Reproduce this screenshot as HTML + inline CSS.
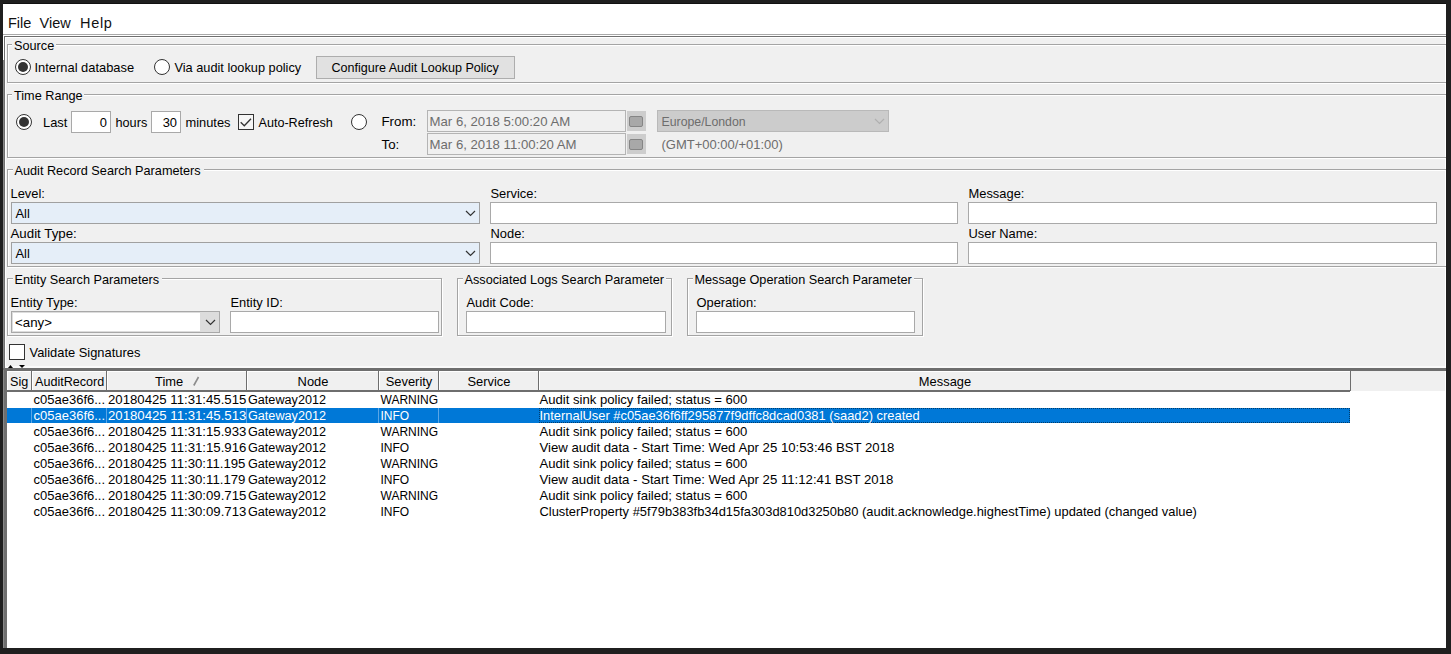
<!DOCTYPE html>
<html><head><meta charset="utf-8"><style>
html,body{margin:0;padding:0;background:#1f1f1f}
body{width:1451px;height:654px;background:#1f1f1f;position:relative;overflow:hidden;font-family:"Liberation Sans", sans-serif}
#win{position:absolute;left:0;top:0;width:1446px;height:648px;overflow:hidden}
</style></head><body><div id="win">
<div style="position:absolute;left:3px;top:4px;width:1443px;height:644px;background:#f0f0f0"></div>
<div style="position:absolute;left:3px;top:3px;width:1443px;height:1px;background:#111"></div>
<div style="position:absolute;left:3px;top:4px;width:1443px;height:30px;background:#fff"></div>
<div style="position:absolute;left:3px;top:34px;width:1443px;height:1px;background:#a9a9a9"></div>
<div style="position:absolute;left:3px;top:35px;width:1443px;height:1px;background:#fff"></div>
<div style="position:absolute;left:8px;top:13.21px;height:20px;line-height:20px;font-size:14.5px;color:#111;white-space:pre;">File</div>
<div style="position:absolute;left:39.5px;top:13.21px;height:20px;line-height:20px;font-size:14.5px;color:#111;white-space:pre;">View</div>
<div style="position:absolute;left:80px;top:13.21px;height:20px;line-height:20px;font-size:14.5px;color:#111;white-space:pre;letter-spacing:0.7px">Help</div>
<div style="position:absolute;left:4px;top:36px;width:1442px;height:1px;background:#6f6f6f"></div>
<div style="position:absolute;left:3px;top:36px;width:1px;height:24px;background:#fff"></div>
<div style="position:absolute;left:4px;top:36px;width:1px;height:24px;background:#6f6f6f"></div>
<div style="position:absolute;left:3px;top:60px;width:1px;height:308px;background:#888"></div>
<div style="position:absolute;left:4px;top:60px;width:1px;height:308px;background:#707070"></div>
<div style="position:absolute;left:5px;top:37px;width:1440px;height:1px;background:#fff"></div>
<div style="position:absolute;left:5px;top:37px;width:1px;height:331px;background:#fff"></div>
<div style="position:absolute;left:1445px;top:37px;width:1px;height:331px;background:#fff"></div>
<div style="position:absolute;left:8px;top:45px;width:1453px;height:39px;border:1px solid #fff;border-right:none;box-sizing:border-box"></div>
<div style="position:absolute;left:7px;top:44px;width:1453px;height:39px;border:1px solid #a4a4a4;border-right:none;box-sizing:border-box"></div>
<div style="position:absolute;left:12px;top:43px;width:44px;height:4px;background:#f0f0f0"></div>
<div style="position:absolute;left:14px;top:35.80px;height:20px;line-height:20px;font-size:12.7px;color:#000;white-space:pre;">Source</div>
<div style="position:absolute;left:15px;top:59px;width:14px;height:14px;border:1px solid #333;border-radius:50%;background:#fff"></div>
<div style="position:absolute;left:18px;top:62px;width:10px;height:10px;border-radius:50%;background:#333"></div>
<div style="position:absolute;left:34.5px;top:57.74px;height:20px;line-height:20px;font-size:12.9px;color:#000;white-space:pre;">Internal database</div>
<div style="position:absolute;left:154px;top:59px;width:14px;height:14px;border:1px solid #333;border-radius:50%;background:#fff"></div>
<div style="position:absolute;left:174.5px;top:57.79px;height:20px;line-height:20px;font-size:12.75px;color:#000;white-space:pre;">Via audit lookup policy</div>
<div style="position:absolute;left:316px;top:56px;width:199px;height:23px;border:1px solid #adadad;background:#e1e1e1;box-sizing:border-box"></div>
<div style="position:absolute;left:331.5px;top:57.85px;height:20px;line-height:20px;font-size:12.55px;color:#000;white-space:pre;">Configure Audit Lookup Policy</div>
<div style="position:absolute;left:8px;top:95px;width:1453px;height:64px;border:1px solid #fff;border-right:none;box-sizing:border-box"></div>
<div style="position:absolute;left:7px;top:94px;width:1453px;height:64px;border:1px solid #a4a4a4;border-right:none;box-sizing:border-box"></div>
<div style="position:absolute;left:12px;top:93px;width:72px;height:4px;background:#f0f0f0"></div>
<div style="position:absolute;left:14px;top:85.80px;height:20px;line-height:20px;font-size:12.7px;color:#000;white-space:pre;">Time Range</div>
<div style="position:absolute;left:16px;top:114px;width:14px;height:14px;border:1px solid #333;border-radius:50%;background:#fff"></div>
<div style="position:absolute;left:19px;top:117px;width:10px;height:10px;border-radius:50%;background:#333"></div>
<div style="position:absolute;left:43px;top:112.74px;height:20px;line-height:20px;font-size:12.9px;color:#000;white-space:pre;">Last</div>
<div style="position:absolute;left:71px;top:111px;width:40px;height:22px;border:1px solid #a9a9a9;background:#fff;box-sizing:border-box"></div>
<div style="position:absolute;left:71px;top:112.74px;height:20px;line-height:20px;font-size:12.9px;color:#000;white-space:pre;width:36px;text-align:right">0</div>
<div style="position:absolute;left:115.5px;top:112.80px;height:20px;line-height:20px;font-size:12.7px;color:#000;white-space:pre;">hours</div>
<div style="position:absolute;left:151px;top:111px;width:30px;height:22px;border:1px solid #a9a9a9;background:#fff;box-sizing:border-box"></div>
<div style="position:absolute;left:151px;top:112.74px;height:20px;line-height:20px;font-size:12.9px;color:#000;white-space:pre;width:26px;text-align:right">30</div>
<div style="position:absolute;left:185.5px;top:112.75px;height:20px;line-height:20px;font-size:12.85px;color:#000;white-space:pre;">minutes</div>
<div style="position:absolute;left:238px;top:114px;width:16px;height:16px;border:1px solid #333;background:#f6f6f6;box-sizing:border-box"></div>
<svg style="position:absolute;left:0;top:0" width="1451" height="654"><polyline points="240.7,122.3 244.3,125.8 251,118.7" fill="none" stroke="#333" stroke-width="1.3"/></svg>
<div style="position:absolute;left:258.5px;top:112.84px;height:20px;line-height:20px;font-size:12.6px;color:#000;white-space:pre;">Auto-Refresh</div>
<div style="position:absolute;left:351px;top:114px;width:14px;height:14px;border:1px solid #333;border-radius:50%;background:#fff"></div>
<div style="position:absolute;left:381.5px;top:111.60px;height:20px;line-height:20px;font-size:13.3px;color:#000;white-space:pre;">From:</div>
<div style="position:absolute;left:381.5px;top:134.60px;height:20px;line-height:20px;font-size:13.3px;color:#000;white-space:pre;">To:</div>
<div style="position:absolute;left:427px;top:110px;width:199px;height:22px;border:1px solid #b4b4b4;background:#f0f0f0;box-sizing:border-box"></div>
<div style="position:absolute;left:427px;top:133px;width:199px;height:22px;border:1px solid #b4b4b4;background:#f0f0f0;box-sizing:border-box"></div>
<div style="position:absolute;left:429.5px;top:111.64px;height:20px;line-height:20px;font-size:13.2px;color:#6d6d6d;white-space:pre;">Mar 6, 2018 5:00:20 AM</div>
<div style="position:absolute;left:429.5px;top:134.64px;height:20px;line-height:20px;font-size:13.2px;color:#6d6d6d;white-space:pre;">Mar 6, 2018 11:00:20 AM</div>
<div style="position:absolute;left:627px;top:111px;width:19px;height:20px;background:#cdcdcd"></div>
<div style="position:absolute;left:629px;top:116px;width:14px;height:11px;border:1.5px solid #858585;border-radius:2px;background:#a8a8a8;box-sizing:border-box"></div>
<div style="position:absolute;left:627px;top:134px;width:19px;height:20px;background:#cdcdcd"></div>
<div style="position:absolute;left:629px;top:139px;width:14px;height:11px;border:1.5px solid #858585;border-radius:2px;background:#a8a8a8;box-sizing:border-box"></div>
<div style="position:absolute;left:657px;top:110px;width:232px;height:22px;border:1px solid #b9b9b9;background:#cccccc;box-sizing:border-box"></div>
<div style="position:absolute;left:661.5px;top:111.93px;height:20px;line-height:20px;font-size:12.3px;color:#6d6d6d;white-space:pre;">Europe/London</div>
<svg style="position:absolute;left:0;top:0" width="1451" height="654"><polyline points="875,119 879.5,123.5 884,119" fill="none" stroke="#b0b0b0" stroke-width="1.2"/></svg>
<div style="position:absolute;left:661.5px;top:134.70px;height:20px;line-height:20px;font-size:13px;color:#6d6d6d;white-space:pre;">(GMT+00:00/+01:00)</div>
<div style="position:absolute;left:8px;top:170px;width:1453px;height:98px;border:1px solid #fff;border-right:none;box-sizing:border-box"></div>
<div style="position:absolute;left:7px;top:169px;width:1453px;height:98px;border:1px solid #a4a4a4;border-right:none;box-sizing:border-box"></div>
<div style="position:absolute;left:12.5px;top:168px;width:191px;height:4px;background:#f0f0f0"></div>
<div style="position:absolute;left:14.5px;top:160.80px;height:20px;line-height:20px;font-size:12.7px;color:#000;white-space:pre;">Audit Record Search Parameters</div>
<div style="position:absolute;left:10.5px;top:183.74px;height:20px;line-height:20px;font-size:12.9px;color:#000;white-space:pre;">Level:</div>
<div style="position:absolute;left:11px;top:202px;width:469px;height:22px;border:1px solid #a0a0a0;background:#e5eef8;box-sizing:border-box"></div>
<div style="position:absolute;left:15.5px;top:203.74px;height:20px;line-height:20px;font-size:12.9px;color:#000;white-space:pre;">All</div>
<svg style="position:absolute;left:0;top:0" width="1451" height="654"><polyline points="466,211 470.5,215.5 475,211" fill="none" stroke="#333" stroke-width="1.2"/></svg>
<div style="position:absolute;left:10.5px;top:223.60px;height:20px;line-height:20px;font-size:13.3px;color:#000;white-space:pre;">Audit Type:</div>
<div style="position:absolute;left:11px;top:242px;width:469px;height:22px;border:1px solid #a0a0a0;background:#e5eef8;box-sizing:border-box"></div>
<div style="position:absolute;left:15.5px;top:243.74px;height:20px;line-height:20px;font-size:12.9px;color:#000;white-space:pre;">All</div>
<svg style="position:absolute;left:0;top:0" width="1451" height="654"><polyline points="466,251 470.5,255.5 475,251" fill="none" stroke="#333" stroke-width="1.2"/></svg>
<div style="position:absolute;left:490.5px;top:183.74px;height:20px;line-height:20px;font-size:12.9px;color:#000;white-space:pre;">Service:</div>
<div style="position:absolute;left:490px;top:202px;width:468px;height:22px;border:1px solid #a9a9a9;background:#fff;box-sizing:border-box"></div>
<div style="position:absolute;left:490.5px;top:223.74px;height:20px;line-height:20px;font-size:12.9px;color:#000;white-space:pre;">Node:</div>
<div style="position:absolute;left:490px;top:242px;width:468px;height:22px;border:1px solid #a9a9a9;background:#fff;box-sizing:border-box"></div>
<div style="position:absolute;left:968.5px;top:183.74px;height:20px;line-height:20px;font-size:12.9px;color:#000;white-space:pre;">Message:</div>
<div style="position:absolute;left:968px;top:202px;width:469px;height:22px;border:1px solid #a9a9a9;background:#fff;box-sizing:border-box"></div>
<div style="position:absolute;left:968.5px;top:223.74px;height:20px;line-height:20px;font-size:12.9px;color:#000;white-space:pre;">User Name:</div>
<div style="position:absolute;left:968px;top:242px;width:469px;height:22px;border:1px solid #a9a9a9;background:#fff;box-sizing:border-box"></div>
<div style="position:absolute;left:8px;top:279px;width:435px;height:58px;border:1px solid #fff;box-sizing:border-box"></div>
<div style="position:absolute;left:7px;top:278px;width:435px;height:58px;border:1px solid #a4a4a4;box-sizing:border-box"></div>
<div style="position:absolute;left:12.5px;top:277px;width:149px;height:4px;background:#f0f0f0"></div>
<div style="position:absolute;left:14.5px;top:269.80px;height:20px;line-height:20px;font-size:12.7px;color:#000;white-space:pre;">Entity Search Parameters</div>
<div style="position:absolute;left:10.5px;top:292.74px;height:20px;line-height:20px;font-size:12.9px;color:#000;white-space:pre;">Entity Type:</div>
<div style="position:absolute;left:11px;top:311px;width:209px;height:22px;border:1px solid #a8a8a8;background:#dcdcdc;box-sizing:border-box"></div>
<div style="position:absolute;left:13px;top:313px;width:187px;height:18px;background:#fff"></div>
<div style="position:absolute;left:15px;top:312.60px;height:20px;line-height:20px;font-size:13.3px;color:#000;white-space:pre;">&lt;any&gt;</div>
<svg style="position:absolute;left:0;top:0" width="1451" height="654"><polyline points="206,320 210.5,324.5 215,320" fill="none" stroke="#333" stroke-width="1.2"/></svg>
<div style="position:absolute;left:230.5px;top:292.74px;height:20px;line-height:20px;font-size:12.9px;color:#000;white-space:pre;">Entity ID:</div>
<div style="position:absolute;left:230px;top:311px;width:209px;height:22px;border:1px solid #a9a9a9;background:#fff;box-sizing:border-box"></div>
<div style="position:absolute;left:458px;top:279px;width:215px;height:58px;border:1px solid #fff;box-sizing:border-box"></div>
<div style="position:absolute;left:457px;top:278px;width:215px;height:58px;border:1px solid #a4a4a4;box-sizing:border-box"></div>
<div style="position:absolute;left:462.5px;top:277px;width:203px;height:4px;background:#f0f0f0"></div>
<div style="position:absolute;left:464.5px;top:269.80px;height:20px;line-height:20px;font-size:12.7px;color:#000;white-space:pre;">Associated Logs Search Parameter</div>
<div style="position:absolute;left:466.5px;top:292.74px;height:20px;line-height:20px;font-size:12.9px;color:#000;white-space:pre;">Audit Code:</div>
<div style="position:absolute;left:466px;top:311px;width:200px;height:22px;border:1px solid #a9a9a9;background:#fff;box-sizing:border-box"></div>
<div style="position:absolute;left:688px;top:279px;width:236px;height:58px;border:1px solid #fff;box-sizing:border-box"></div>
<div style="position:absolute;left:687px;top:278px;width:236px;height:58px;border:1px solid #a4a4a4;box-sizing:border-box"></div>
<div style="position:absolute;left:692.5px;top:277px;width:221px;height:4px;background:#f0f0f0"></div>
<div style="position:absolute;left:694.5px;top:269.80px;height:20px;line-height:20px;font-size:12.7px;color:#000;white-space:pre;">Message Operation Search Parameter</div>
<div style="position:absolute;left:696.5px;top:292.74px;height:20px;line-height:20px;font-size:12.9px;color:#000;white-space:pre;">Operation:</div>
<div style="position:absolute;left:696px;top:311px;width:219px;height:22px;border:1px solid #a9a9a9;background:#fff;box-sizing:border-box"></div>
<div style="position:absolute;left:9px;top:344px;width:16px;height:16px;border:1px solid #333;background:#fff;box-sizing:border-box"></div>
<div style="position:absolute;left:29.5px;top:342.74px;height:20px;line-height:20px;font-size:12.9px;color:#000;white-space:pre;">Validate Signatures</div>
<div style="position:absolute;left:5px;top:366px;width:1440px;height:2px;background:#fafafa"></div>
<svg style="position:absolute;left:0;top:0" width="1451" height="654"><polygon points="8,368 10.5,365 13,368" fill="#000"/><polygon points="19,365 25,365 22,368" fill="#000"/></svg>
<div style="position:absolute;left:3px;top:368px;width:1443px;height:3px;background:#6e6e6e"></div>
<div style="position:absolute;left:3px;top:370px;width:1px;height:278px;background:#888"></div>
<div style="position:absolute;left:4px;top:370px;width:3px;height:278px;background:#6f6f6f"></div>
<div style="position:absolute;left:7px;top:371px;width:1439px;height:277px;background:#fff"></div>
<div style="position:absolute;left:7px;top:371px;width:1438px;height:20px;background:#f0f0f0"></div>
<div style="position:absolute;left:7px;top:390px;width:1343px;height:2px;background:#6e6e6e"></div>
<div style="position:absolute;left:7px;top:371px;width:25px;height:1px;background:#fff"></div>
<div style="position:absolute;left:7px;top:371px;width:1px;height:19px;background:#fff"></div>
<div style="position:absolute;left:31px;top:371px;width:1px;height:20px;background:#6e6e6e"></div>
<div style="position:absolute;left:10px;top:371.84px;height:20px;line-height:20px;font-size:12.6px;color:#000;white-space:pre;">Sig</div>
<div style="position:absolute;left:32px;top:371px;width:75px;height:1px;background:#fff"></div>
<div style="position:absolute;left:32px;top:371px;width:1px;height:19px;background:#fff"></div>
<div style="position:absolute;left:106px;top:371px;width:1px;height:20px;background:#6e6e6e"></div>
<div style="position:absolute;left:35px;top:371.84px;height:20px;line-height:20px;font-size:12.6px;color:#000;white-space:pre;">AuditRecord</div>
<div style="position:absolute;left:107px;top:371px;width:140px;height:1px;background:#fff"></div>
<div style="position:absolute;left:107px;top:371px;width:1px;height:19px;background:#fff"></div>
<div style="position:absolute;left:246px;top:371px;width:1px;height:20px;background:#6e6e6e"></div>
<div style="position:absolute;left:155px;top:371.74px;height:20px;line-height:20px;font-size:12.9px;color:#000;white-space:pre;">Time</div>
<div style="position:absolute;left:247px;top:371px;width:132px;height:1px;background:#fff"></div>
<div style="position:absolute;left:247px;top:371px;width:1px;height:19px;background:#fff"></div>
<div style="position:absolute;left:378px;top:371px;width:1px;height:20px;background:#6e6e6e"></div>
<div style="position:absolute;left:247px;top:371.74px;height:20px;line-height:20px;font-size:12.9px;color:#000;white-space:pre;width:132px;text-align:center">Node</div>
<div style="position:absolute;left:379px;top:371px;width:60px;height:1px;background:#fff"></div>
<div style="position:absolute;left:379px;top:371px;width:1px;height:19px;background:#fff"></div>
<div style="position:absolute;left:438px;top:371px;width:1px;height:20px;background:#6e6e6e"></div>
<div style="position:absolute;left:379px;top:371.74px;height:20px;line-height:20px;font-size:12.9px;color:#000;white-space:pre;width:60px;text-align:center">Severity</div>
<div style="position:absolute;left:439px;top:371px;width:100px;height:1px;background:#fff"></div>
<div style="position:absolute;left:439px;top:371px;width:1px;height:19px;background:#fff"></div>
<div style="position:absolute;left:538px;top:371px;width:1px;height:20px;background:#6e6e6e"></div>
<div style="position:absolute;left:439px;top:371.74px;height:20px;line-height:20px;font-size:12.9px;color:#000;white-space:pre;width:100px;text-align:center">Service</div>
<div style="position:absolute;left:539px;top:371px;width:812px;height:1px;background:#fff"></div>
<div style="position:absolute;left:539px;top:371px;width:1px;height:19px;background:#fff"></div>
<div style="position:absolute;left:1350px;top:371px;width:1px;height:20px;background:#6e6e6e"></div>
<div style="position:absolute;left:539px;top:371.74px;height:20px;line-height:20px;font-size:12.9px;color:#000;white-space:pre;width:812px;text-align:center">Message</div>
<svg style="position:absolute;left:0;top:0" width="1451" height="654"><line x1="193.8" y1="385.5" x2="198.5" y2="377" stroke="#8c8c8c" stroke-width="1.6"/></svg>
<div style="position:absolute;left:33.5px;top:389.70px;height:20px;line-height:20px;font-size:13px;color:#000;white-space:pre;">c05ae36f6...</div>
<div style="position:absolute;left:108px;top:389.64px;height:20px;line-height:20px;font-size:13.2px;color:#000;white-space:pre;">20180425 11:31:45.515</div>
<div style="position:absolute;left:248px;top:389.82px;height:20px;line-height:20px;font-size:12.65px;color:#000;white-space:pre;">Gateway2012</div>
<div style="position:absolute;left:380.5px;top:390.03px;height:20px;line-height:20px;font-size:12px;color:#000;white-space:pre;">WARNING</div>
<div style="position:absolute;left:539.5px;top:389.67px;height:20px;line-height:20px;font-size:13.1px;color:#000;white-space:pre;">Audit sink policy failed; status = 600</div>
<div style="position:absolute;left:7px;top:408px;width:1343px;height:15px;background:#0078d7"></div>
<div style="position:absolute;left:31px;top:408px;width:1px;height:15px;background:#5aa6e6"></div>
<div style="position:absolute;left:106px;top:408px;width:1px;height:15px;background:#5aa6e6"></div>
<div style="position:absolute;left:246px;top:408px;width:1px;height:15px;background:#5aa6e6"></div>
<div style="position:absolute;left:378px;top:408px;width:1px;height:15px;background:#5aa6e6"></div>
<div style="position:absolute;left:438px;top:408px;width:1px;height:15px;background:#5aa6e6"></div>
<div style="position:absolute;left:539px;top:408px;width:811px;height:15px;border:1px dotted #003c6b;box-sizing:border-box"></div>
<div style="position:absolute;left:33.5px;top:405.70px;height:20px;line-height:20px;font-size:13px;color:#fff;white-space:pre;">c05ae36f6...</div>
<div style="position:absolute;left:108px;top:405.64px;height:20px;line-height:20px;font-size:13.2px;color:#fff;white-space:pre;">20180425 11:31:45.513</div>
<div style="position:absolute;left:248px;top:405.82px;height:20px;line-height:20px;font-size:12.65px;color:#fff;white-space:pre;">Gateway2012</div>
<div style="position:absolute;left:380.5px;top:406.03px;height:20px;line-height:20px;font-size:12px;color:#fff;white-space:pre;">INFO</div>
<div style="position:absolute;left:539.5px;top:405.74px;height:20px;line-height:20px;font-size:12.9px;color:#fff;white-space:pre;">InternalUser #c05ae36f6ff295877f9dffc8dcad0381 (saad2) created</div>
<div style="position:absolute;left:33.5px;top:421.70px;height:20px;line-height:20px;font-size:13px;color:#000;white-space:pre;">c05ae36f6...</div>
<div style="position:absolute;left:108px;top:421.64px;height:20px;line-height:20px;font-size:13.2px;color:#000;white-space:pre;">20180425 11:31:15.933</div>
<div style="position:absolute;left:248px;top:421.82px;height:20px;line-height:20px;font-size:12.65px;color:#000;white-space:pre;">Gateway2012</div>
<div style="position:absolute;left:380.5px;top:422.03px;height:20px;line-height:20px;font-size:12px;color:#000;white-space:pre;">WARNING</div>
<div style="position:absolute;left:539.5px;top:421.67px;height:20px;line-height:20px;font-size:13.1px;color:#000;white-space:pre;">Audit sink policy failed; status = 600</div>
<div style="position:absolute;left:33.5px;top:437.70px;height:20px;line-height:20px;font-size:13px;color:#000;white-space:pre;">c05ae36f6...</div>
<div style="position:absolute;left:108px;top:437.64px;height:20px;line-height:20px;font-size:13.2px;color:#000;white-space:pre;">20180425 11:31:15.916</div>
<div style="position:absolute;left:248px;top:437.82px;height:20px;line-height:20px;font-size:12.65px;color:#000;white-space:pre;">Gateway2012</div>
<div style="position:absolute;left:380.5px;top:438.03px;height:20px;line-height:20px;font-size:12px;color:#000;white-space:pre;">INFO</div>
<div style="position:absolute;left:539.5px;top:437.64px;height:20px;line-height:20px;font-size:13.2px;color:#000;white-space:pre;">View audit data - Start Time: Wed Apr 25 10:53:46 BST 2018</div>
<div style="position:absolute;left:33.5px;top:453.70px;height:20px;line-height:20px;font-size:13px;color:#000;white-space:pre;">c05ae36f6...</div>
<div style="position:absolute;left:108px;top:453.64px;height:20px;line-height:20px;font-size:13.2px;color:#000;white-space:pre;">20180425 11:30:11.195</div>
<div style="position:absolute;left:248px;top:453.82px;height:20px;line-height:20px;font-size:12.65px;color:#000;white-space:pre;">Gateway2012</div>
<div style="position:absolute;left:380.5px;top:454.03px;height:20px;line-height:20px;font-size:12px;color:#000;white-space:pre;">WARNING</div>
<div style="position:absolute;left:539.5px;top:453.67px;height:20px;line-height:20px;font-size:13.1px;color:#000;white-space:pre;">Audit sink policy failed; status = 600</div>
<div style="position:absolute;left:33.5px;top:469.70px;height:20px;line-height:20px;font-size:13px;color:#000;white-space:pre;">c05ae36f6...</div>
<div style="position:absolute;left:108px;top:469.64px;height:20px;line-height:20px;font-size:13.2px;color:#000;white-space:pre;">20180425 11:30:11.179</div>
<div style="position:absolute;left:248px;top:469.82px;height:20px;line-height:20px;font-size:12.65px;color:#000;white-space:pre;">Gateway2012</div>
<div style="position:absolute;left:380.5px;top:470.03px;height:20px;line-height:20px;font-size:12px;color:#000;white-space:pre;">INFO</div>
<div style="position:absolute;left:539.5px;top:469.64px;height:20px;line-height:20px;font-size:13.2px;color:#000;white-space:pre;">View audit data - Start Time: Wed Apr 25 11:12:41 BST 2018</div>
<div style="position:absolute;left:33.5px;top:485.70px;height:20px;line-height:20px;font-size:13px;color:#000;white-space:pre;">c05ae36f6...</div>
<div style="position:absolute;left:108px;top:485.64px;height:20px;line-height:20px;font-size:13.2px;color:#000;white-space:pre;">20180425 11:30:09.715</div>
<div style="position:absolute;left:248px;top:485.82px;height:20px;line-height:20px;font-size:12.65px;color:#000;white-space:pre;">Gateway2012</div>
<div style="position:absolute;left:380.5px;top:486.03px;height:20px;line-height:20px;font-size:12px;color:#000;white-space:pre;">WARNING</div>
<div style="position:absolute;left:539.5px;top:485.67px;height:20px;line-height:20px;font-size:13.1px;color:#000;white-space:pre;">Audit sink policy failed; status = 600</div>
<div style="position:absolute;left:33.5px;top:501.70px;height:20px;line-height:20px;font-size:13px;color:#000;white-space:pre;">c05ae36f6...</div>
<div style="position:absolute;left:108px;top:501.64px;height:20px;line-height:20px;font-size:13.2px;color:#000;white-space:pre;">20180425 11:30:09.713</div>
<div style="position:absolute;left:248px;top:501.82px;height:20px;line-height:20px;font-size:12.65px;color:#000;white-space:pre;">Gateway2012</div>
<div style="position:absolute;left:380.5px;top:502.03px;height:20px;line-height:20px;font-size:12px;color:#000;white-space:pre;">INFO</div>
<div style="position:absolute;left:539.5px;top:501.74px;height:20px;line-height:20px;font-size:12.9px;color:#000;white-space:pre;">ClusterProperty #5f79b383fb34d15fa303d810d3250b80 (audit.acknowledge.highestTime) updated (changed value)</div>
</div></body></html>
